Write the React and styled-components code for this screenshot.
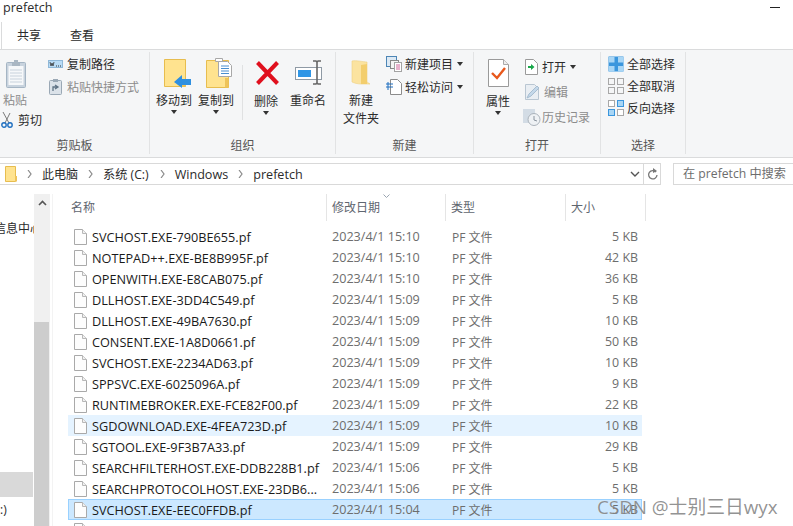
import React from 'react';
import styled, { createGlobalStyle } from 'styled-components';

const GlobalStyle = createGlobalStyle`
  html, body { margin: 0; padding: 0; background: #fff; overflow: hidden; }
  #root { width: 793px; height: 526px; overflow: hidden; }
`;

const FONT = `"Open Sans", "Noto Sans CJK SC", sans-serif`;

const Window = styled.div`
  position: relative;
  width: 793px;
  height: 526px;
  overflow: hidden;
  display: flex;
  flex-direction: column;
  font-family: ${FONT};
  font-size: 12px;
  color: #2b2b2b;
  background: #fff;
`;

const TitleBar = styled.div`
  height: 22px;
  flex: none;
  display: flex;
  justify-content: space-between;
  padding: 0 13px 0 3px;
  line-height: 15px;
  font-size: 12.6px;
`;

const MinimizeLine = styled.div`
  width: 10px;
  height: 1px;
  margin-top: 7px;
  background: #222;
`;

const TabRow = styled.div`
  height: 27px;
  flex: none;
  display: flex;
  align-items: center;
  gap: 29px;
  margin-left: 1px;
  padding: 0 0 1px 15px;
  border-left: 1px solid #dadbdc;
  box-sizing: border-box;
`;

const Ribbon = styled.div`
  height: 109px;
  flex: none;
  box-sizing: border-box;
  display: flex;
  background: #f5f6f7;
  border-top: 1px solid #dadbdc;
  border-bottom: 1px solid #dadbdc;
`;

const Group = styled.div`
  width: ${(p) => p.$w}px;
  flex: none;
  box-sizing: border-box;
  margin: 2px 0 3px;
  border-right: 1px solid #e2e3e4;
  display: flex;
  flex-direction: column;
`;

const GroupBody = styled.div`
  flex: 1;
  display: flex;
  min-height: 0;
  padding-left: ${(p) => p.$pl || 0}px;
`;

const GroupLabel = styled.div`
  height: 22px;
  line-height: 28px;
  text-align: center;
  color: #555;
`;

const BigButton = styled.div`
  width: ${(p) => p.$w}px;
  flex: none;
  margin-left: ${(p) => p.$ml || 0}px;
  display: flex;
  flex-direction: column;
  align-items: center;
  text-align: center;
  padding-top: ${(p) => p.$pt || 5}px;
  color: ${(p) => (p.$off ? '#8c8c8c' : '#2b2b2b')};
  line-height: 18px;
  white-space: nowrap;
`;

const BigIcon = styled.div`
  height: 31px;
  box-sizing: border-box;
  margin-bottom: 4px;
  padding-bottom: ${(p) => p.$pb || 0}px;
  padding-left: ${(p) => p.$shift || 0}px;
  display: flex;
  align-items: flex-end;
  justify-content: center;
`;

const Caret = styled.div`
  width: 0;
  height: 0;
  flex: none;
  border-left: 3.5px solid transparent;
  border-right: 3.5px solid transparent;
  border-top: 4px solid #333;
  margin: ${(p) => p.$m || '0'};
`;

const Divider = styled.div`
  width: 1px;
  height: 55px;
  margin: 13px 11px 0 8px;
  background: #e0e1e2;
  flex: none;
`;

const SmallColumn = styled.div`
  display: flex;
  flex-direction: column;
  gap: ${(p) => p.$gap ?? 4}px;
  padding: ${(p) => p.$pt ?? 4}px 0 0 ${(p) => p.$pl || 0}px;
`;

const SmallButton = styled.div`
  height: ${(p) => p.$h || 18}px;
  margin-left: ${(p) => p.$ml || 0}px;
  display: flex;
  align-items: center;
  gap: ${(p) => p.$gap ?? 4}px;
  white-space: nowrap;
  color: ${(p) => (p.$off ? '#8c8c8c' : '#2b2b2b')};
`;

const AddressRow = styled.div`
  height: 31px;
  flex: none;
  display: flex;
  padding-top: 5px;
  box-sizing: border-box;
`;

const AddressBox = styled.div`
  width: 661px;
  height: 22px;
  flex: none;
  box-sizing: border-box;
  border: 1px solid #d9d9d9;
  border-left: none;
  display: flex;
  align-items: center;
  padding-left: 5px;
`;

const Crumb = styled.span`
  margin-left: ${(p) => p.$ml}px;
  white-space: nowrap;
  font-size: ${(p) => p.$fs || 12}px;
`;

const CrumbArrow = styled.svg`
  width: 5px;
  height: 8px;
  margin-left: ${(p) => p.$ml}px;
  flex: none;
`;

const AddressEnd = styled.div`
  margin-left: auto;
  display: flex;
  align-items: center;
  height: 100%;
`;

const RefreshCell = styled.div`
  width: 16px;
  height: 100%;
  margin-left: 3px;
  border-left: 1px solid #d9d9d9;
  display: flex;
  align-items: center;
  justify-content: center;
`;

const SearchBox = styled.div`
  margin-left: 12px;
  flex: 1;
  height: 22px;
  box-sizing: border-box;
  border: 1px solid #d9d9d9;
  border-right: none;
  line-height: 20px;
  padding-left: 9px;
  color: #6d6d6d;
  font-size: 12.2px;
  white-space: nowrap;
`;

const Content = styled.div`
  flex: 1;
  display: flex;
  min-height: 0;
`;

const NavPane = styled.div`
  width: 34px;
  flex: none;
  overflow: hidden;
  padding-top: 28px;
`;

const NavItem = styled.div`
  height: ${(p) => p.$h}px;
  margin-bottom: ${(p) => p.$mb || 0}px;
  margin-right: ${(p) => (p.$active ? 1 : 0)}px;
  display: flex;
  justify-content: flex-end;
  align-items: center;
  white-space: nowrap;
  background: ${(p) => (p.$active ? '#d9d9d9' : 'transparent')};
`;

const NavText = styled.span`
  margin-right: ${(p) => p.$mr || 0}px;
`;

const NavDrive = styled(NavItem)`
  justify-content: flex-start;
`;

const Scrollbar = styled.div`
  width: 16px;
  flex: none;
  display: flex;
  flex-direction: column;
  align-items: stretch;
  background: #f0f0f0;
  margin-top: 5px;
  margin-right: 18px;
  box-shadow: 2px 0 0 #fff, 3px 0 0 #f3f3f3;
`;

const ScrollUp = styled.div`
  height: 18px;
  display: flex;
  align-items: center;
  justify-content: center;
  margin-bottom: 110px;
`;

const ScrollThumb = styled.div`
  flex: 1;
  margin-right: 1px;
  background: #cdcdcd;
`;

const Files = styled.div`
  flex: 1;
  min-width: 0;
`;

const HeaderRow = styled.div`
  position: relative;
  display: grid;
  grid-template-columns: 259px 119px 120px 80px;
  height: 32px;
  margin-top: 5px;
`;

const HeaderCell = styled.div`
  height: 27px;
  padding-left: ${(p) => p.$pl}px;
  line-height: 28px;
  border-right: 1px solid #e5e5e5;
  color: #5f6670;
`;

const SortMark = styled.svg`
  position: absolute;
  left: 315px;
  top: 0;
  width: 7px;
  height: 4px;
`;

const FileRow = styled.div`
  display: grid;
  grid-template-columns: 264px 120px 120px 70px;
  width: 574px;
  height: 21px;
  box-sizing: border-box;
  align-items: center;
  background: ${(p) => (p.$selected ? '#cce8ff' : p.$hover ? '#e5f3ff' : 'transparent')};
  outline: ${(p) => (p.$selected ? '1px solid #99d1ff' : 'none')};
  outline-offset: -1px;
`;

const NameCell = styled.div`
  display: flex;
  align-items: center;
  gap: 5px;
  padding-left: 6px;
  font-size: 12.7px;
  color: #1a1a1a;
  white-space: nowrap;
`;

const InfoCell = styled.div`
  color: #6d6d6d;
  white-space: nowrap;
  font-size: ${(p) => p.$fs || 12}px;
`;

const SizeCell = styled(InfoCell)`
  text-align: right;
  padding-right: 4px;
`;

const Watermark = styled.div`
  position: absolute;
  left: 597px;
  top: 496px;
  font-size: 18.8px;
  line-height: 22px;
  color: rgba(105, 105, 105, 0.72);
  white-space: nowrap;
  text-shadow: 0 0 1px rgba(255, 255, 255, 0.6);
`;

const FileIcon = () => (
  <svg width="13" height="16" viewBox="0 0 13 16">
    <path d="M.5.5h8l4 4v11H.5z" fill="#fdfdfd" stroke="#a9a9a9" />
    <path d="M8.5.5v4h4" fill="#f0f0f0" stroke="#b8b8b8" />
  </svg>
);

const PasteIcon = () => (
  <svg width="20" height="29" viewBox="0 0 20 29">
    <rect x=".5" y="3.500" width="19" height="25" rx="1" fill="#c8d3de" stroke="#a5b5c4" />
    <rect x="2.500" y="7" width="15" height="19" fill="#f6f8fa" />
    <path d="M4 11h12M4 14h12M4 17h12M4 20h12M4 23h12" stroke="#c8d2dc" />
    <path d="M6 4h2V1h4v3h2v3H6z" fill="#aab7c3" />
  </svg>
);

const ScissorsIcon = () => (
  <svg width="12" height="16" viewBox="0 0 12 16">
    <path d="M9 1L4 11M2 0l6 11" stroke="#7a7a7a" fill="none" />
    <circle cx="3" cy="13" r="2.200" fill="none" stroke="#1f6fc0" strokeWidth="1.400" />
    <circle cx="9" cy="13" r="2.200" fill="none" stroke="#1f6fc0" strokeWidth="1.400" />
  </svg>
);

const CopyPathIcon = () => (
  <svg width="15" height="8" viewBox="0 0 15 8">
    <rect x=".5" y=".5" width="14" height="7" fill="#b9dcf6" stroke="#8fb8d8" />
    <path d="M2 2l1 4 1-3 1 3 1-4" stroke="#333" fill="none" strokeWidth=".8" />
    <path d="M8 6h1M10 6h1M12 6h1" stroke="#333" />
  </svg>
);

const ShortcutIcon = () => (
  <svg width="13" height="16" viewBox="0 0 13 16">
    <rect x=".5" y="1.500" width="12" height="14" rx="1" fill="#dbe2e9" stroke="#9aa8b5" />
    <rect x="4" y="0" width="5" height="3" fill="#9aa8b5" />
    <path d="M4 12V8h4M6 6l3 2-3 2" stroke="#5f7385" fill="none" strokeWidth="1.300" />
  </svg>
);

const MoveToIcon = () => (
  <svg width="27" height="29" viewBox="0 0 27 29">
    <path d="M.5.5h21v27H.5z" fill="#ffe38f" stroke="#e7bd4f" />
    <path d="M18 20h3.500v7.500H18z" fill="#eec35a" />
    <path d="M10 23l8-7v4h9v6h-9v3z" fill="#2e8fe0" />
  </svg>
);

const CopyToIcon = () => (
  <svg width="27" height="30" viewBox="0 0 27 30">
    <path d="M.5 2.500h22v27H.5z" fill="#ffe38f" stroke="#e7bd4f" />
    <path d="M19 20h3.500v9.500H19z" fill="#eec35a" />
    <path d="M9.500.5h7v3h-7z" fill="#fff" stroke="#a8a8a8" />
    <path d="M12.500 3.500h9l4 4v11h-13z" fill="#fff" stroke="#a8a8a8" />
    <path d="M15 8h8M15 10.500h8M15 13h8M15 15.500h8" stroke="#4a8fd0" />
  </svg>
);

const DeleteIcon = () => (
  <svg width="25" height="26" viewBox="0 0 25 26">
    <path d="M2.500 2.500l20 21M22.500 2.500l-20 21" stroke="#e0101e" strokeWidth="4" />
  </svg>
);

const RenameIcon = () => (
  <svg width="28" height="25" viewBox="0 0 28 25">
    <rect x=".5" y="7.500" width="26" height="12" fill="#fff" stroke="#8f9aa5" />
    <rect x="3" y="10" width="13" height="7" fill="#2f96e6" />
    <path d="M18 1h3l1 1 1-1h3M18 24h3l1-1 1 1h3M22 2v21" stroke="#666" strokeWidth="1.600" fill="none" />
  </svg>
);

const BigFolderIcon = () => (
  <svg width="20" height="26" viewBox="0 0 20 26">
    <path d="M1 2c4-1 12 1 15 1v20l3 2H10C7 25 3 24 1 23z" fill="#fbe3a0" stroke="#eed081" strokeWidth=".6" />
    <path d="M10 6l6-1v20h-6z" fill="#f3ce6d" />
  </svg>
);

const NewItemIcon = () => (
  <svg width="16" height="16" viewBox="0 0 16 16">
    <rect x=".5" y=".5" width="10" height="10" fill="#dce9f4" stroke="#4c85b5" />
    <rect x="4.500" y="4.500" width="8" height="8" fill="#f4f4f4" stroke="#888" />
    <rect x="8.500" y="6.500" width="7" height="9" fill="#fff" stroke="#a3a3a3" />
    <path d="M10 9h4M10 11h4M10 13h4" stroke="#d1669a" />
  </svg>
);

const EasyAccessIcon = () => (
  <svg width="16" height="16" viewBox="0 0 16 16">
    <path d="M4.500.5h7l4 4v11h-11z" fill="#fff" stroke="#8c8c8c" />
    <path d="M0 5h7M0 8h7" stroke="#1f6fc0" />
    <path d="M2 11V3" stroke="#1f6fc0" />
  </svg>
);

const PropertiesIcon = () => (
  <svg width="21" height="28" viewBox="0 0 21 28">
    <path d="M.5.5h15l5 5v22H.5z" fill="#fff" stroke="#9a9a9a" />
    <path d="M15.500.5v5h5" fill="#eee" stroke="#aaa" />
    <path d="M4 14l5 5 8-10" stroke="#e8581c" strokeWidth="2.400" fill="none" />
  </svg>
);

const OpenIcon = () => (
  <svg width="13" height="16" viewBox="0 0 13 16">
    <path d="M.5.5h8l4 4v11H.5z" fill="#fff" stroke="#9a9a9a" />
    <path d="M3 7h3V5l3.500 3L6 11V9H3z" fill="#18a84a" />
  </svg>
);

const EditIcon = () => (
  <svg width="15" height="16" viewBox="0 0 15 16">
    <path d="M.5.5h9l4 4v11H.5z" fill="#e9eef3" stroke="#b9c6d2" />
    <path d="M2 14l2-4 8-8 2 2-8 8z" fill="#c4d8ea" stroke="#a7bdd0" />
  </svg>
);

const HistoryIcon = () => (
  <svg width="18" height="17" viewBox="0 0 18 17">
    <rect x="0" y="0" width="12" height="14" fill="#d3dce5" />
    <circle cx="11" cy="10.500" r="6" fill="#eef1f4" stroke="#aab2ba" />
    <path d="M11 7v4l3 1" stroke="#8a949e" fill="none" />
  </svg>
);

// marks which of the four panes are filled, as in the three select icons
const SelectIcon = ({ on, off }) => {
  const cells = [[0, 0], [9, 0], [0, 9], [9, 9]];
  const all = on.length === 4;
  return (
    <svg width="16" height="16" viewBox="0 0 16 16">
      {all && <rect x=".5" y=".5" width="15" height="15" fill="#3a96dd" />}
      {cells.map(([x, y], i) => (
        <rect
          key={i}
          x={x + (all ? 1 : 0.5)}
          y={y + (all ? 1 : 0.5)}
          width={all ? 5.5 : 6}
          height={all ? 5.5 : 6}
          fill={on.includes(i) ? '#a9d6f5' : off ? '#f5f6f7' : '#fff'}
          stroke={all ? 'none' : on.includes(i) ? '#3a96dd' : '#a8a8a8'}
        />
      ))}
    </svg>
  );
};

const files = [
  ['SVCHOST.EXE-790BE655.pf', '2023/4/1 15:10', '5 KB'],
  ['NOTEPAD++.EXE-BE8B995F.pf', '2023/4/1 15:10', '42 KB'],
  ['OPENWITH.EXE-E8CAB075.pf', '2023/4/1 15:10', '36 KB'],
  ['DLLHOST.EXE-3DD4C549.pf', '2023/4/1 15:09', '5 KB'],
  ['DLLHOST.EXE-49BA7630.pf', '2023/4/1 15:09', '10 KB'],
  ['CONSENT.EXE-1A8D0661.pf', '2023/4/1 15:09', '50 KB'],
  ['SVCHOST.EXE-2234AD63.pf', '2023/4/1 15:09', '10 KB'],
  ['SPPSVC.EXE-6025096A.pf', '2023/4/1 15:09', '9 KB'],
  ['RUNTIMEBROKER.EXE-FCE82F00.pf', '2023/4/1 15:09', '22 KB'],
  ['SGDOWNLOAD.EXE-4FEA723D.pf', '2023/4/1 15:09', '10 KB', 'hover'],
  ['SGTOOL.EXE-9F3B7A33.pf', '2023/4/1 15:09', '29 KB'],
  ['SEARCHFILTERHOST.EXE-DDB228B1.pf', '2023/4/1 15:06', '5 KB'],
  ['SEARCHPROTOCOLHOST.EXE-23DB6...', '2023/4/1 15:06', '5 KB'],
  ['SVCHOST.EXE-EEC0FFDB.pf', '2023/4/1 15:04', '5 KB', 'selected'],
  ['', '', ''],
];

const Arrow = ({ ml }) => (
  <CrumbArrow $ml={ml} viewBox="0 0 5 8">
    <path d="M1 0l3 4-3 4" stroke="#8a8a8a" fill="none" strokeWidth="1.200" />
  </CrumbArrow>
);

export default function App() {
  return (
    <Window>
      <GlobalStyle />
      <TitleBar>
        <span>prefetch</span>
        <MinimizeLine />
      </TitleBar>
      <TabRow>
        <span>共享</span>
        <span>查看</span>
      </TabRow>
      <Ribbon>
        <Group $w={150}>
          <GroupBody $pl={3}>
            <div>
              <BigButton $w={24} $off>
                <BigIcon $shift={2}><PasteIcon /></BigIcon>
                粘贴
              </BigButton>
              <SmallButton $h={20} $gap={5} $ml={-2}>
                <ScissorsIcon />
                剪切
              </SmallButton>
            </div>
            <SmallColumn $pl={6} $pt={3} $gap={5}>
              <SmallButton $gap={4}><CopyPathIcon />复制路径</SmallButton>
              <SmallButton $gap={5} $off $ml={1}><ShortcutIcon />粘贴快捷方式</SmallButton>
            </SmallColumn>
          </GroupBody>
          <GroupLabel>剪贴板</GroupLabel>
        </Group>
        <Group $w={186}>
          <GroupBody $pl={6}>
            <BigButton $w={36}>
              <BigIcon $shift={6}><MoveToIcon /></BigIcon>
              移动到
              <Caret />
            </BigButton>
            <BigButton $w={36} $ml={6}>
              <BigIcon $shift={6}><CopyToIcon /></BigIcon>
              复制到
              <Caret />
            </BigButton>
            <Divider />
            <BigButton $w={24} $pt={6}>
              <BigIcon $pb={3} $shift={2}><DeleteIcon /></BigIcon>
              删除
              <Caret />
            </BigButton>
            <BigButton $w={36} $ml={12}>
              <BigIcon $pb={3} $shift={2}><RenameIcon /></BigIcon>
              重命名
            </BigButton>
          </GroupBody>
          <GroupLabel>组织</GroupLabel>
        </Group>
        <Group $w={138}>
          <GroupBody $pl={7}>
            <BigButton $w={36}>
              <BigIcon $pb={3}><BigFolderIcon /></BigIcon>
              新建<br />文件夹
            </BigButton>
            <SmallColumn $pl={7} $pt={3} $gap={5}>
              <SmallButton $gap={3}>
                <NewItemIcon />新建项目<Caret $m="0 0 0 1px" />
              </SmallButton>
              <SmallButton $gap={3}>
                <EasyAccessIcon />轻松访问<Caret $m="0 0 0 1px" />
              </SmallButton>
            </SmallColumn>
          </GroupBody>
          <GroupLabel>新建</GroupLabel>
        </Group>
        <Group $w={127}>
          <GroupBody $pl={6}>
            <BigButton $w={36} $pt={6}>
              <BigIcon $pb={2}><PropertiesIcon /></BigIcon>
              属性
              <Caret />
            </BigButton>
            <SmallColumn $pl={7} $pt={6} $gap={7}>
              <SmallButton $gap={4} $ml={2}>
                <OpenIcon />打开<Caret $m="0 0 0 0" />
              </SmallButton>
              <SmallButton $gap={4} $ml={2} $off>
                <EditIcon />编辑
              </SmallButton>
              <SmallButton $gap={1} $off><HistoryIcon />历史记录</SmallButton>
            </SmallColumn>
          </GroupBody>
          <GroupLabel>打开</GroupLabel>
        </Group>
        <Group $w={85}>
          <GroupBody $pl={7}>
            <SmallColumn $pt={3} $gap={4}>
              <SmallButton $gap={3}><SelectIcon on={[0, 1, 2, 3]} />全部选择</SmallButton>
              <SmallButton $gap={3}><SelectIcon on={[]} off />全部取消</SmallButton>
              <SmallButton $gap={3}><SelectIcon on={[1, 2]} />反向选择</SmallButton>
            </SmallColumn>
          </GroupBody>
          <GroupLabel>选择</GroupLabel>
        </Group>
      </Ribbon>
      <AddressRow>
        <AddressBox>
          <svg width="13" height="16" viewBox="0 0 13 16">
            <path d="M.5.5h10v15H.5z" fill="#ffe38f" stroke="#e7bd4f" />
            <path d="M10 10h2v5.500h-2z" fill="#eec35a" />
          </svg>
          <Arrow ml={9} />
          <Crumb $ml={10}>此电脑</Crumb>
          <Arrow ml={10} />
          <Crumb $ml={10} $fs={12.2}>系统 (C:)</Crumb>
          <Arrow ml={11} />
          <Crumb $ml={10} $fs={12.6}>Windows</Crumb>
          <Arrow ml={10} />
          <Crumb $ml={10} $fs={12.6}>prefetch</Crumb>
          <AddressEnd>
            <svg width="10" height="6" viewBox="0 0 10 6">
              <path d="M1 1l4 4 4-4" stroke="#555" fill="none" strokeWidth="1.400" />
            </svg>
            <RefreshCell>
              <svg width="11" height="13" viewBox="0 0 11 13">
                <path d="M9 4a4.200 4.200 0 1 0 1 3" stroke="#777" fill="none" strokeWidth="1.300" />
                <path d="M6 0l4 3-4 2z" fill="#777" />
              </svg>
            </RefreshCell>
          </AddressEnd>
        </AddressBox>
        <SearchBox>在 prefetch 中搜索</SearchBox>
      </AddressRow>
      <Content>
        <NavPane>
          <NavItem $h={21} $mb={234}><NavText $mr={-8}>信息中心</NavText></NavItem>
          <NavItem $h={25} $active />
          <NavDrive $h={24}>:)</NavDrive>
        </NavPane>
        <Scrollbar>
          <ScrollUp>
            <svg width="9" height="6" viewBox="0 0 9 6">
              <path d="M1 5l3.500-3.500L8 5" stroke="#555" fill="none" strokeWidth="1.600" />
            </svg>
          </ScrollUp>
          <ScrollThumb />
        </Scrollbar>
        <Files>
          <HeaderRow>
            <HeaderCell $pl={3}>名称</HeaderCell>
            <HeaderCell $pl={5}>修改日期</HeaderCell>
            <HeaderCell $pl={5}>类型</HeaderCell>
            <HeaderCell $pl={5}>大小</HeaderCell>
            <SortMark viewBox="0 0 7 4">
              <path d="M.5.500l3 3 3-3" stroke="#9aa5b1" fill="none" />
            </SortMark>
          </HeaderRow>
          {files.map(([name, date, size, state]) => (
            <FileRow key={name || 'next'} $hover={state === 'hover'} $selected={state === 'selected'}>
              <NameCell><FileIcon />{name}</NameCell>
              <InfoCell $fs={12.6}>{date}</InfoCell>
              <InfoCell>{name && 'PF 文件'}</InfoCell>
              <SizeCell $fs={12.4}>{size}</SizeCell>
            </FileRow>
          ))}
        </Files>
      </Content>
      <Watermark>CSDN @士别三日wyx</Watermark>
    </Window>
  );
}
